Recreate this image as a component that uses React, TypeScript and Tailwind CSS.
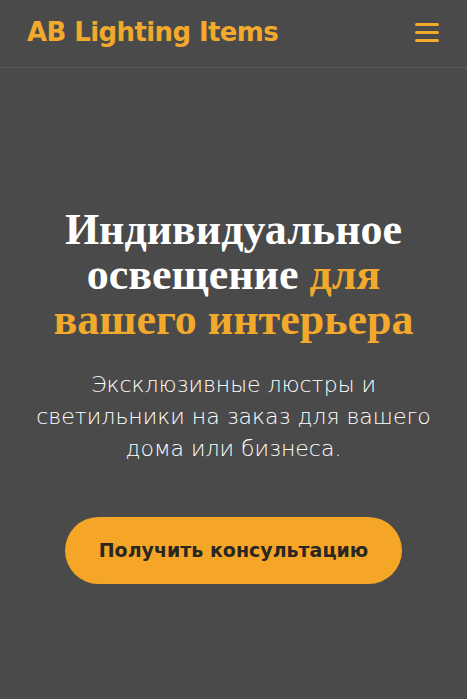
export default function App() {
  return (
    <div className="min-h-[699px] bg-[#4a4a4a] flex flex-col">
      {/* Header */}
      <header className="h-[68px] flex items-center justify-between px-[27px] border-b border-[#5e5a4c]">
        <span className="text-[#f2a92c] text-[26px] font-semibold font-['DejaVu_Sans',sans-serif] tracking-[-0.6px] -mt-[3px]">
          AB Lighting Items
        </span>
        <button className="flex flex-col gap-[5px] w-[24px] mr-[1px] -mt-[3px]" aria-label="Меню">
          <span className="h-[3px] bg-[#f2a92c] rounded-sm"></span>
          <span className="h-[3px] bg-[#f2a92c] rounded-sm"></span>
          <span className="h-[3px] bg-[#f2a92c] rounded-sm"></span>
        </button>
      </header>

      {/* Hero */}
      <main className="flex flex-col items-center text-center px-4 pt-[139px]">
        <h1 className="font-['Liberation_Serif',serif] font-bold text-white text-[44px] leading-[45px]">
          Индивидуальное освещение <span className="text-[#f2a92c]">для вашего интерьера</span>
        </h1>
        <p className="mt-[27px] font-['DejaVu_Sans',sans-serif] font-extralight text-white text-[22px] leading-[32px] max-w-[410px]">
          Эксклюзивные люстры и светильники на заказ для вашего дома или бизнеса.
        </p>
        <button className="mt-[52px] w-[337px] h-[67px] rounded-full bg-[#f5a627] text-[#2b2622] font-['DejaVu_Sans',sans-serif] font-semibold text-[19px]">
          Получить консультацию
        </button>
      </main>
    </div>
  );
}
